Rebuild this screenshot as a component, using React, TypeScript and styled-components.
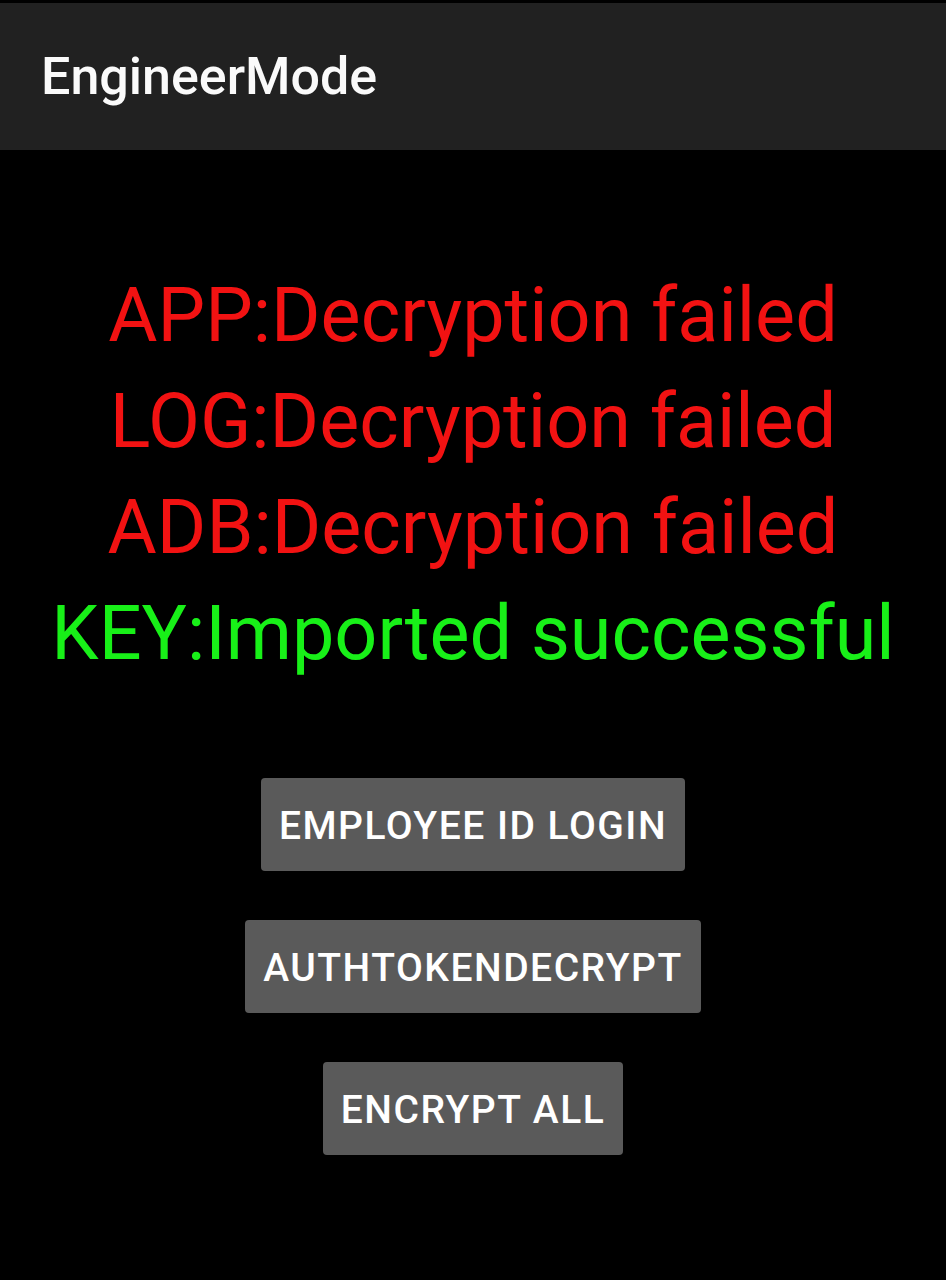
import React from "react";
import styled, { createGlobalStyle } from "styled-components";

const Global = createGlobalStyle`
  html, body { margin: 0; padding: 0; background: #000; }
  body { font-family: Roboto, "Noto Sans", sans-serif; }
`;

const Screen = styled.div`
  width: 946px;
  height: 1280px;
  background: #000;
  display: flex;
  flex-direction: column;
  overflow: hidden;
`;

const TopBar = styled.header`
  height: 147px;
  margin-top: 3px;
  background: #212121;
  display: flex;
  align-items: center;
  padding-left: 41px;
  box-sizing: border-box;
`;

const Title = styled.h1`
  margin: 0;
  color: #fafafa;
  font-family: Roboto, sans-serif;
  font-weight: 500;
  font-size: 52px;
  line-height: 60px;
  letter-spacing: 0;
`;

const StatusList = styled.div`
  display: flex;
  flex-direction: column;
  align-items: center;
  padding-top: 112px;
`;

const StatusLine = styled.div<{ $ok?: boolean }>`
  color: ${(p) => (p.$ok ? "#18f018" : "#f21212")};
  font-family: Roboto, sans-serif;
  font-size: 75.5px;
  line-height: 106px;
  white-space: nowrap;
`;

const Buttons = styled.div`
  display: flex;
  flex-direction: column;
  align-items: center;
  gap: 49px;
  margin-top: 92px;
`;

const Button = styled.button`
  height: 93px;
  padding: 2px 18px 0;
  background: #5a5a5a;
  color: #fff;
  border: none;
  border-radius: 4px;
  font-family: Roboto, sans-serif;
  font-weight: 500;
  font-size: 39px;
  letter-spacing: 1.5px;
  text-transform: uppercase;
`;

export default function App() {
  return (
    <Screen>
      <Global />
      <TopBar>
        <Title>EngineerMode</Title>
      </TopBar>
      <StatusList>
        <StatusLine>APP:Decryption failed</StatusLine>
        <StatusLine>LOG:Decryption failed</StatusLine>
        <StatusLine>ADB:Decryption failed</StatusLine>
        <StatusLine $ok>KEY:Imported successful</StatusLine>
      </StatusList>
      <Buttons>
        <Button>EMPLOYEE ID LOGIN</Button>
        <Button>AUTHTOKENDECRYPT</Button>
        <Button>ENCRYPT ALL</Button>
      </Buttons>
    </Screen>
  );
}
